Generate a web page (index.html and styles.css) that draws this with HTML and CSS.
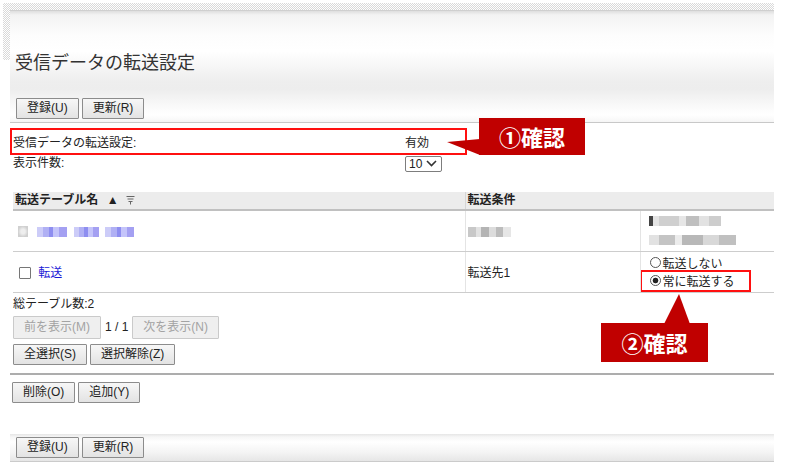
FILE: index.html
```html
<!DOCTYPE html>
<html lang="ja">
<head>
  <meta charset="UTF-8">
  <title>受信データの転送設定</title>
  <link rel="stylesheet" href="styles.css">
</head>
<body>

  <div class="wrap">
    <div class="dots">
      <div class="head">
        <h1 class="title">受信データの転送設定</h1>
        <div class="btn-row">
          <button class="btn">登録(U)</button>
          <button class="btn">更新(R)</button>
        </div>
      </div>
    </div>

    <div class="main">
      <div class="settings">
        <div class="set-row marked">
          <span class="set-label">受信データの転送設定:</span>
          <span>有効</span>
        </div>
        <div class="set-row">
          <span class="set-label">表示件数:</span>
          <span class="sel">10
            <svg width="11" height="7" viewBox="0 0 11 7"><path d="M1 1 L5.5 5.5 L10 1" fill="none" stroke="#333" stroke-width="1.6"/></svg>
          </span>
        </div>
      </div>

      <table class="list">
        <colgroup>
          <col class="col-name">
          <col class="col-cond">
          <col class="col-opt">
        </colgroup>
        <thead>
          <tr>
            <th class="c-name">転送テーブル名 <span class="arrow">▲</span>
              <svg class="filter" width="9" height="10" viewBox="0 0 9 10"><path d="M0.5 1.5h8M1.5 4h6M2.5 6.5h4M4.5 6.5v3" stroke="#666" stroke-width="1"/></svg>
            </th>
            <th class="c-cond" colspan="2">転送条件</th>
          </tr>
        </thead>
        <tbody>
          <tr class="row1">
            <td class="c-name">
              <span class="mos mos-box"></span>
              <span class="mos mos-link w30"></span>
              <span class="mos mos-link w25"></span>
              <span class="mos mos-link w29"></span>
            </td>
            <td class="c-cond"><span class="mos mos-gray w43"></span></td>
            <td class="c-opt">
              <span class="mos mos-line l1"></span>
              <span class="mos mos-line l2"></span>
            </td>
          </tr>
          <tr class="row2">
            <td class="c-name"><input type="checkbox" class="chk"> <a href="#" class="link">転送</a></td>
            <td class="c-cond">転送先1</td>
            <td class="c-opt">
              <label class="opt"><input type="radio" name="mode" class="rad">転送しない</label>
              <label class="opt marked-opt"><input type="radio" name="mode" class="rad" checked>常に転送する</label>
            </td>
          </tr>
        </tbody>
      </table>

      <p class="count">総テーブル数:2</p>

      <div class="btn-row pager">
        <button class="btn btn-off" disabled>前を表示(M)</button>
        <span class="page-no">1 / 1</span>
        <button class="btn btn-off" disabled>次を表示(N)</button>
      </div>

      <div class="btn-row pick">
        <button class="btn">全選択(S)</button>
        <button class="btn">選択解除(Z)</button>
      </div>

      <div class="sep"></div>

      <div class="btn-row edit">
        <button class="btn">削除(O)</button>
        <button class="btn">追加(Y)</button>
      </div>

      <div class="foot">
        <div class="btn-row">
          <button class="btn">登録(U)</button>
          <button class="btn">更新(R)</button>
        </div>
      </div>
    </div>

    <div class="callout c1">①確認</div>
    <div class="callout c2">②確認</div>
  </div>

</body>
</html>
```

FILE: styles.css
```css
body {
  margin: 0;
  font-family: "Liberation Sans", "Noto Sans CJK JP", sans-serif;
  font-size: 12px;
  color: #222;
  background: #fff;
}
.wrap {
  position: relative;
  margin: 3px 16px 0 3px;
}
.dots {
  padding: 7px 0 0 7px;
  background:
    linear-gradient(#fff, #fff) no-repeat 0 57px / 7px 100%,
    repeating-conic-gradient(#d9d9d9 0 25%, #fff 0 50%) 0 0 / 2px 2px;
}
.head {
  border-top: 1px solid #cfcfcf;
  border-bottom: 1px solid #c8c8c8;
  padding: 40px 0 3px 5px;
  background: linear-gradient(#dedede 0, #f3f3f3 4px, #fdfdfd 25px, #fff 40px, #eeeeee 70px, #ededed 78px, #fafafa 96px, #fff 104px, #f4f4f4 112px);
}
.title {
  margin: 0;
  font-size: 18px;
  font-weight: normal;
  line-height: 24px;
  color: #333;
}
.head .btn-row {
  margin: 23px 0 0 1px;
}
.btn-row {
  display: flex;
  align-items: center;
  gap: 3px;
}
.btn {
  height: 21px;
  padding: 0 10px;
  font: inherit;
  font-size: 12px;
  line-height: 19px;
  color: #222;
  border: 1px solid #8c8c8c;
  border-radius: 1px;
  background: linear-gradient(#f7f7f7, #e3e3e3);
}
.btn-off {
  height: 23px;
  color: #a3a3a3;
  border-color: #cacaca;
  background: #efefef;
}

.main {
  padding-left: 7px;
}
.settings {
  margin-top: 5px;
}
.set-row {
  display: flex;
  align-items: center;
  padding-left: 3px;
  height: 17px;
  line-height: 17px;
}
.set-row.marked {
  box-sizing: border-box;
  width: 457px;
  height: 27px;
  padding: 3px 0 0 1px;
  border: 2px solid #ff1010;
  line-height: 20px;
  align-items: flex-start;
}
.set-label {
  width: 392px;
}
.sel {
  display: inline-flex;
  align-items: center;
  gap: 4px;
  box-sizing: border-box;
  height: 16px;
  width: 37px;
  padding: 0 3px;
  border: 1px solid #7d7d7d;
  border-radius: 2px;
  font-size: 12px;
  line-height: 14px;
}

.list {
  margin: 20px 0 0 3px;
  width: 761px;
  border-collapse: collapse;
  table-layout: fixed;
}
.col-name { width: 452px; }
.col-cond { width: 175px; }
.col-opt { width: 134px; }
.list th,
.list td {
  box-sizing: border-box;
}
.list th {
  height: 17px;
  padding: 0 2px;
  text-align: left;
  font-weight: bold;
  line-height: 17px;
  background: #ececec;
  border-bottom: 2px solid #c0c0c0;
}
.list th.c-cond {
  border-left: 1px solid #d6d6d6;
}
.list td {
  padding: 0;
  vertical-align: middle;
  border-bottom: 1px solid #cdcdcd;
}
.list td.c-name {
  padding-left: 5px;
}
.list td.c-cond {
  padding-left: 2px;
  border-left: 1px solid #e4e4e4;
}
.list td.c-opt {
  border-left: 1px solid #e4e4e4;
}
.arrow {
  margin-left: 5px;
  font-size: 12px;
}
.filter {
  margin-left: 4px;
  vertical-align: -1px;
}

.row1 td {
  height: 41px;
}
.mos {
  display: inline-block;
  height: 10px;
  vertical-align: middle;
}
.mos-box {
  width: 10px;
  height: 11px;
  margin-right: 6px;
  background: radial-gradient(#eeeeee 30%, #d0d0d0 70%);
}
.mos-link {
  margin-right: 3px;
  background: linear-gradient(90deg, #ccccf8 0 20%, #b0b0f4 20% 40%, #8e8ef0 40% 55%, #c4c4fa 55% 75%, #a4a0f2 75% 100%);
}
.mos-gray {
  background: linear-gradient(90deg, #c8c8c8 0 18%, #e2e2e2 18% 30%, #b4b4b4 30% 50%, #dcdcdc 50% 65%, #bcbcbc 65% 82%, #e6e6e6 82% 100%);
}
.w30 { width: 30px; }
.w25 { width: 25px; }
.w29 { width: 29px; }
.w43 { width: 43px; }
.mos-line {
  display: block;
  margin-left: 8px;
  height: 10px;
}
.l1 {
  width: 72px;
  background: linear-gradient(90deg, #444 0 6%, #e4e4e4 6% 14%, #cfcfcf 14% 42%, #e6e6e6 42% 52%, #bfbfbf 52% 70%, #e2e2e2 70% 84%, #cdcdcd 84% 100%);
}
.l2 {
  width: 87px;
  margin-top: 9px;
  background: linear-gradient(90deg, #e2e2e2 0 12%, #c4c4c4 12% 30%, #ececec 30% 38%, #b8b8b8 38% 62%, #d8d8d8 62% 80%, #c0c0c0 80% 100%);
}

.chk {
  appearance: none;
  width: 12px;
  height: 12px;
  margin: 0 4px 0 1px;
  vertical-align: -2px;
  border: 1px solid #767676;
  border-radius: 1px;
  background: #fff;
}
.link {
  color: #1818d6;
  text-decoration: none;
}
.row2 td.c-opt {
  vertical-align: top;
  padding-top: 2px;
}
.opt {
  display: flex;
  align-items: center;
  height: 18px;
  padding-left: 9px;
}
.marked-opt {
  box-sizing: border-box;
  width: 111px;
  height: 22px;
  margin: -2px 0 0 -1px;
  padding-left: 8px;
  border: 2px solid #ff1010;
}
.rad {
  appearance: none;
  width: 11px;
  height: 11px;
  margin: 0 2px 0 0;
  border: 1px solid #555;
  border-radius: 50%;
  background: #fff;
}
.rad:checked {
  background: radial-gradient(circle, #222 0 2.5px, #fff 3.2px);
}

.count {
  margin: 3px 0 0 3px;
  line-height: 16px;
}
.pager {
  margin: 4px 0 0 3px;
  gap: 4px;
}
.page-no {
  color: #222;
}
.pick {
  margin: 5px 0 0 3px;
}
.sep {
  margin-top: 8px;
  height: 2px;
  background: #adadad;
}
.edit {
  margin: 7px 0 0 2px;
}
.foot {
  margin-top: 31px;
  height: 24px;
  padding: 3px 0 0 6px;
  border-bottom: 1px solid #cbcbcb;
  background: linear-gradient(#e6e6e6 0, #f6f6f6 3px, #fff 8px, #f4f4f4 18px, #e6e6e6 27px);
}

.callout {
  position: absolute;
  background: #c00000;
  color: #fff;
  font-family: "Noto Sans CJK JP", sans-serif;
  font-weight: bold;
  font-size: 22px;
  text-align: center;
}
.callout::before {
  content: "";
  position: absolute;
  background: #c00000;
}
.c1 {
  left: 476px;
  top: 115px;
  width: 106px;
  height: 37px;
  line-height: 37px;
}
.c1::before {
  left: -32px;
  top: 20px;
  width: 33px;
  height: 17px;
  clip-path: polygon(0 4px, 100% 1px, 100% 100%);
}
.c2 {
  left: 598px;
  top: 320px;
  width: 107px;
  height: 39px;
  line-height: 39px;
}
.c2::before {
  left: 63px;
  top: -29px;
  width: 26px;
  height: 30px;
  clip-path: polygon(15px 0, 100% 100%, 0 100%);
}
```
